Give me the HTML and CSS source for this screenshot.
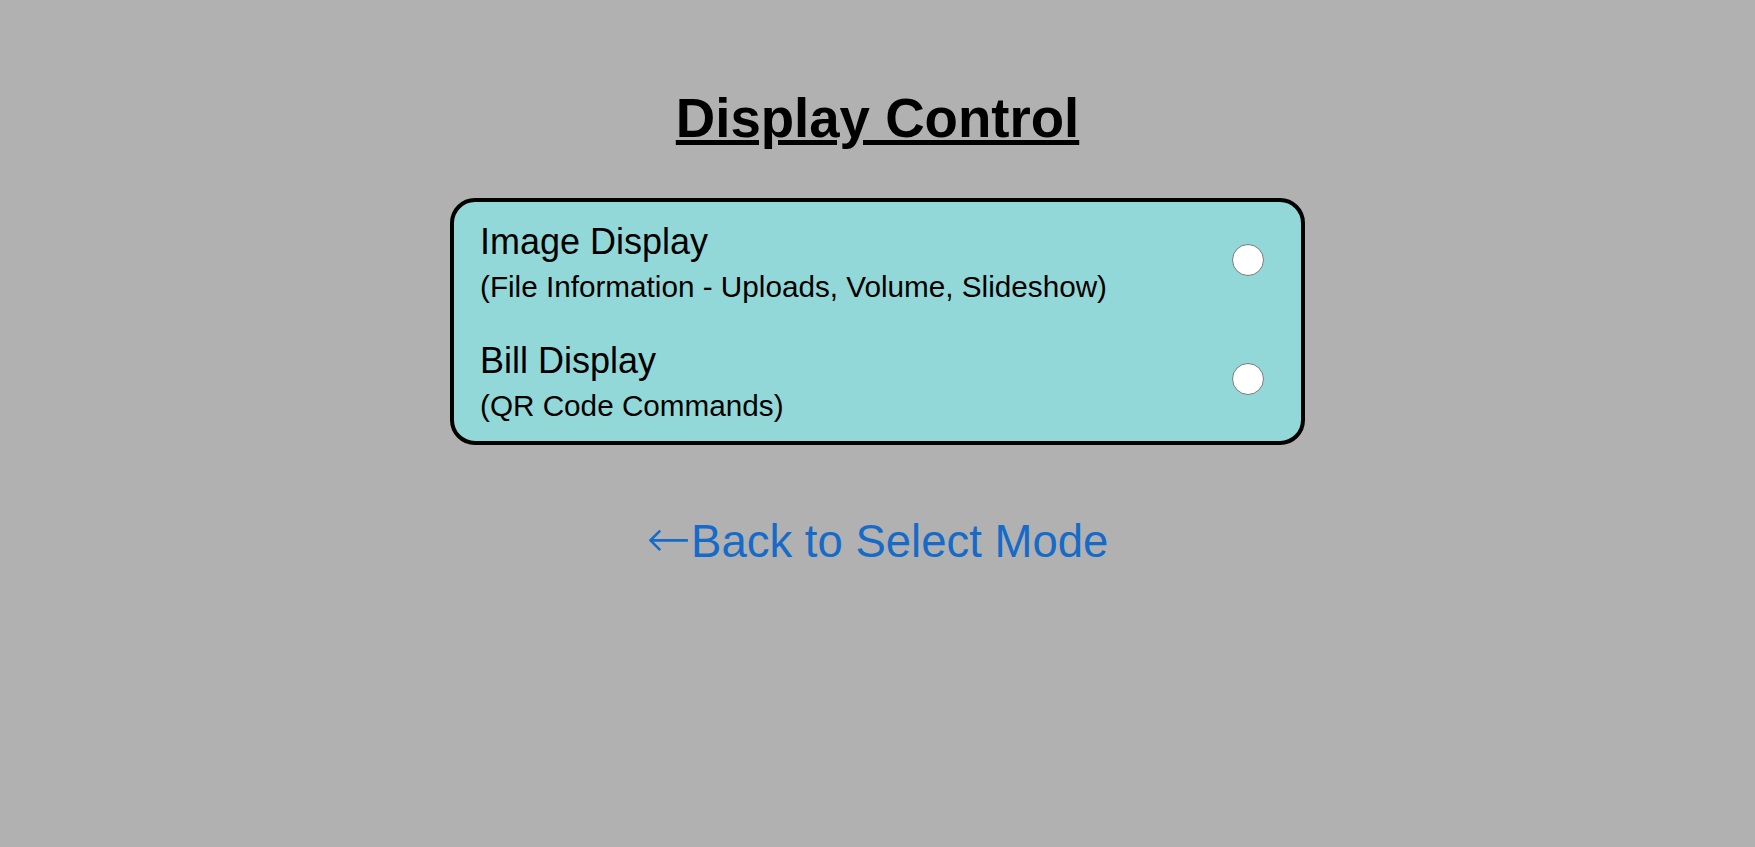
FILE: index.html
```html
<!DOCTYPE html>
<html lang="en">
<head>
<meta charset="utf-8">
<title>Display Control</title>
<link rel="stylesheet" href="styles.css">
</head>
<body>
<main class="page">
  <h1 class="title">Display Control</h1>
  <form class="card">
    <label class="option">
      <span class="option-text">
        <span class="option-title">Image Display</span>
        <span class="option-sub">(File Information - Uploads, Volume, Slideshow)</span>
      </span>
      <input class="radio" type="radio" name="mode" value="image">
    </label>
    <label class="option">
      <span class="option-text">
        <span class="option-title">Bill Display</span>
        <span class="option-sub">(QR Code Commands)</span>
      </span>
      <input class="radio" type="radio" name="mode" value="bill">
    </label>
  </form>
  <a class="back" href="#"><span class="arrow">&larr;</span>Back to Select Mode</a>
</main>
</body>
</html>
```

FILE: styles.css
```css
html, body {
  margin: 0;
  padding: 0;
  background: #b1b1b1;
}

body {
  font-family: "Liberation Sans", Arial, sans-serif;
  color: #000;
}

.page {
  display: flex;
  flex-direction: column;
  align-items: center;
}

.title {
  margin: 88px 0 48px;
  font-size: 54.6px;
  line-height: 62px;
  font-weight: bold;
  text-decoration: underline;
}

.card {
  box-sizing: border-box;
  width: 855px;
  margin: 0;
  padding: 20px 37px 18px 26px;
  background: #93d8d8;
  border: 4px solid #000;
  border-radius: 25px;
  display: flex;
  flex-direction: column;
  gap: 37px;
}

.option {
  display: flex;
  align-items: center;
  justify-content: space-between;
}

.option-text {
  display: flex;
  flex-direction: column;
}

.option-title {
  font-size: 36px;
  line-height: 40px;
}

.option-sub {
  font-size: 29.7px;
  line-height: 34px;
  margin-top: 8px;
}

.radio {
  appearance: none;
  -webkit-appearance: none;
  box-sizing: border-box;
  width: 32px;
  height: 32px;
  margin: 0 0 6px 0;
  border-radius: 50%;
  background: #fff;
  border: 1px solid #7a7a7a;
}

.back {
  margin-top: 69px;
  font-size: 45.5px;
  line-height: 50px;
  color: #166bc9;
  text-decoration: none;
}

.arrow {
  font-family: "DejaVu Sans", sans-serif;
  font-size: 53px;
  font-weight: 200;
}
```
